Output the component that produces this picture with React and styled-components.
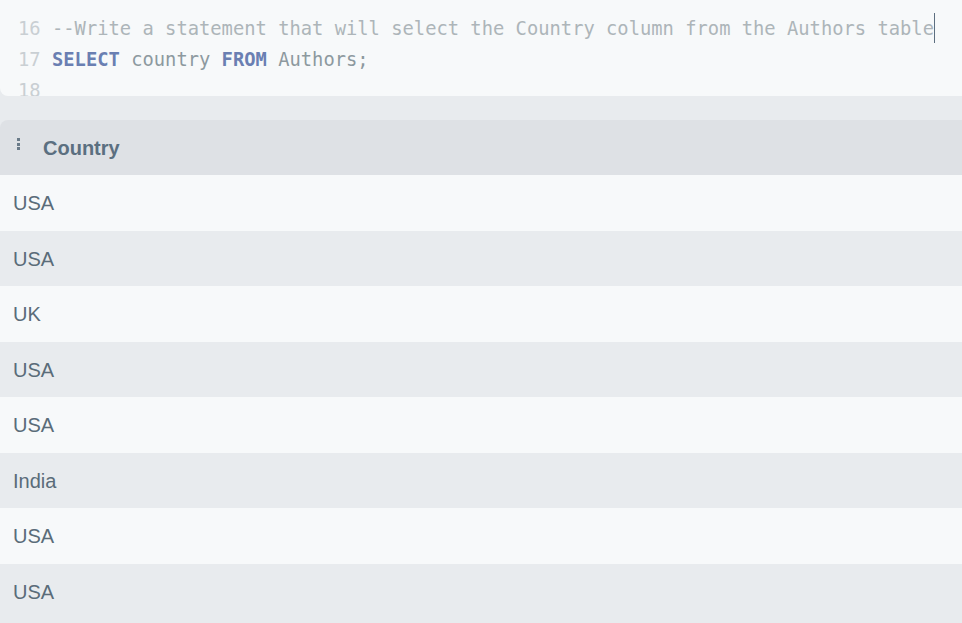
import React from 'react';
import styled, { createGlobalStyle } from 'styled-components';

const GlobalStyle = createGlobalStyle`
  html, body {
    margin: 0;
    padding: 0;
    background: #e8ebee;
    overflow: hidden;
  }
`;

const Page = styled.div`
  width: 962px;
  height: 623px;
  display: flex;
  flex-direction: column;
  gap: 24px;
  background: #e8ebee;
`;

const Editor = styled.div`
  height: 96px;
  overflow: hidden;
  background: #f7f9fa;
  border-bottom-left-radius: 8px;
  padding-top: 13px;
  box-sizing: border-box;
  font-family: 'DejaVu Sans Mono', 'Liberation Mono', monospace;
  font-size: 18.8px;
`;

const Line = styled.div`
  display: flex;
  height: 31px;
  line-height: 31px;
  white-space: pre;
`;

const LineNo = styled.span`
  width: 34px;
  padding-left: 18px;
  color: #c9cfd3;
  flex: none;
`;

const Code = styled.span`
  color: #8d999f;
`;

const Comment = styled.span`
  color: #adb5b9;
`;

const Keyword = styled.span`
  color: #6a7fb2;
  font-weight: bold;
`;

const Caret = styled.span`
  display: inline-block;
  width: 1px;
  height: 30px;
  background: #5d6f80;
  vertical-align: middle;
  margin-top: -4px;
`;

const Table = styled.div`
  display: flex;
  flex-direction: column;
  font-family: 'Liberation Sans', Arial, sans-serif;
`;

const HeaderRow = styled.div`
  height: 55px;
  box-sizing: border-box;
  padding-top: 2px;
  display: flex;
  align-items: center;
  gap: 23px;
  padding-left: 17px;
  background: #dee1e5;
  border-top-left-radius: 8px;
  color: #5b6f80;
  font-size: 20px;
  font-weight: bold;
`;

const Handle = styled.span`
  display: flex;
  flex-direction: column;
  gap: 1.5px;
  margin-top: -9px;
  & > i {
    display: block;
    width: 3px;
    height: 3px;
    background: #6a7b89;
  }
`;

const Row = styled.div`
  height: 55.5px;
  box-sizing: border-box;
  padding-top: 2px;
  display: flex;
  align-items: center;
  padding-left: 13px;
  font-size: 20px;
  color: #5a6c79;
  background: ${(p) => (p.alt ? '#e8ebee' : '#f7f9fa')};
`;

const rows = ['USA', 'USA', 'UK', 'USA', 'USA', 'India', 'USA', 'USA'];

export default function App() {
  return (
    <>
      <GlobalStyle />
      <Page>
        <Editor>
          <Line>
            <LineNo>16</LineNo>
            <Code>
              <Comment>--Write a statement that will select the Country column from the Authors table</Comment>
              <Caret />
            </Code>
          </Line>
          <Line>
            <LineNo>17</LineNo>
            <Code>
              <Keyword>SELECT</Keyword> country <Keyword>FROM</Keyword> Authors;
            </Code>
          </Line>
          <Line>
            <LineNo>18</LineNo>
            <Code />
          </Line>
        </Editor>
        <Table>
          <HeaderRow>
            <Handle>
              <i />
              <i />
              <i />
            </Handle>
            Country
          </HeaderRow>
          {rows.map((r, i) => (
            <Row key={i} alt={i % 2 === 1}>
              {r}
            </Row>
          ))}
        </Table>
      </Page>
    </>
  );
}
